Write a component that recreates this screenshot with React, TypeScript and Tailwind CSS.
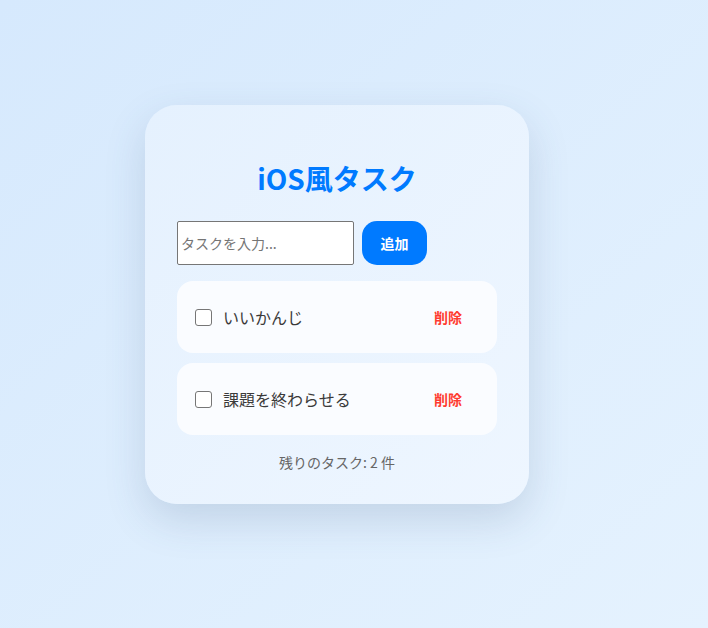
import React, { useState } from "react";

type Task = { id: number; text: string; done: boolean };

export default function App() {
  const [tasks, setTasks] = useState<Task[]>([
    { id: 1, text: "いいかんじ", done: false },
    { id: 2, text: "課題を終わらせる", done: false },
  ]);
  const [input, setInput] = useState("");

  const addTask = () => {
    if (!input.trim()) return;
    setTasks([...tasks, { id: Date.now(), text: input.trim(), done: false }]);
    setInput("");
  };

  const remaining = tasks.filter((t) => !t.done).length;

  return (
    <div
      className="w-full h-[628px] flex items-center justify-center pr-[34px] pb-[19px] bg-gradient-to-br from-[#d6e9fd] to-[#e5f2fe]"
      style={{ fontFamily: '"Noto Sans CJK JP", "Noto Sans", sans-serif' }}
    >
      <div className="w-[384px] rounded-[32px] px-8 pt-8 pb-8 bg-gradient-to-br from-[#e5f1fe] to-[#eef6ff] shadow-[0_16px_40px_rgba(60,90,130,0.18)]">
        <h2 className="text-center text-[28px] font-bold text-[#007aff] leading-[40px] mt-[21px] mb-[23px]">
          iOS風タスク
        </h2>

        <div className="flex items-center gap-2 mb-4">
          <input
            value={input}
            onChange={(e) => setInput(e.target.value)}
            placeholder="タスクを入力..."
            className="w-[177px] h-[44px] bg-white border border-[#767676] rounded-[2px] px-[3px] text-[14px] text-[#333] placeholder:text-[#757575] outline-none"
          />
          <button
            onClick={addTask}
            className="w-[65px] h-[44px] rounded-[15px] bg-[#007aff] text-white text-[14px] font-bold"
          >
            追加
          </button>
        </div>

        <ul className="flex flex-col gap-[10px]">
          {tasks.map((t) => (
            <li
              key={t.id}
              className="h-[72px] flex items-center pl-[18px] pr-[19px] rounded-[16px] bg-[#fafcff]"
            >
              <input
                type="checkbox"
                checked={t.done}
                onChange={() =>
                  setTasks(tasks.map((x) => (x.id === t.id ? { ...x, done: !x.done } : x)))
                }
                className="w-[17px] h-[17px] appearance-none border-[1.5px] border-[#767676] rounded-[3px] bg-white shrink-0 checked:bg-[#007aff] checked:border-[#007aff]"
              />
              <span className={"ml-[11px] flex-1 text-[16px] " + (t.done ? "text-[#999] line-through" : "text-[#3a3a3a]")}>
                {t.text}
              </span>
              <button
                onClick={() => setTasks(tasks.filter((x) => x.id !== t.id))}
                className="px-4 py-[10px] text-[14px] leading-[20px] font-bold text-[#ff3b30]"
              >
                削除
              </button>
            </li>
          ))}
        </ul>

        <p className="mt-[17px] text-center text-[14px] leading-[20px] text-[#666]">
          残りのタスク: {remaining} 件
        </p>
      </div>
    </div>
  );
}
